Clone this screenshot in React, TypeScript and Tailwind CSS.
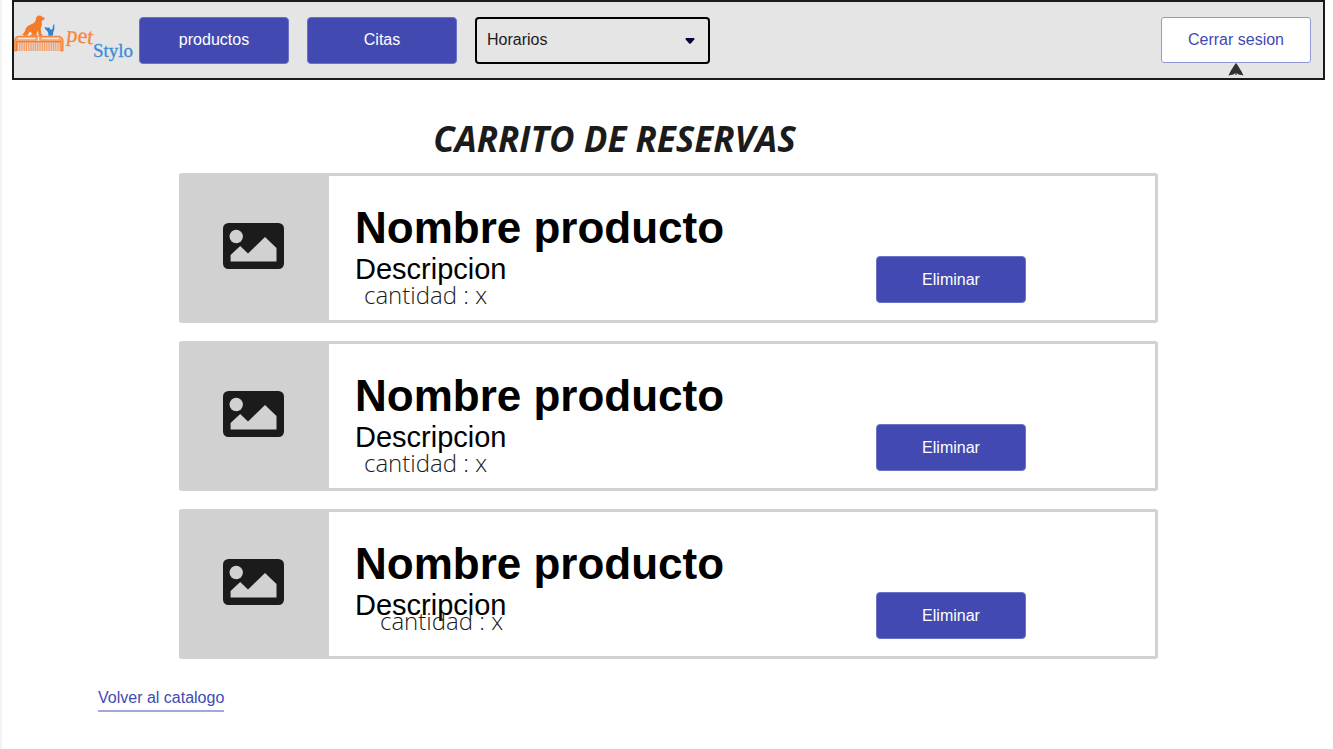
import React from "react";

const products = [
  { id: 1, quantity: "ml-[9px]" },
  { id: 2, quantity: "ml-[9px]" },
  { id: 3, quantity: "ml-[25px] -mt-[10px]" },
];

const primaryButton =
  "h-[47px] w-[150px] shrink-0 rounded border border-[#6b71c6] bg-[#424ab2] text-base text-white";

function Logo() {
  return (
    <svg
      viewBox="0 0 120 56"
      className="h-[56px] w-[120px] shrink-0"
      role="img"
      aria-label="pet Stylo"
    >
      <path
        fill="#f47b2a"
        d="M8 22.300C9.500 21.800 10.800 20 11.300 18C11.800 15.500 14 13.200 17.500 12.200C19.800 11.400 21 10.200 21.700 8.200C22 5.800 22.800 3.800 24.800 3.500C26.300 3.200 27.300 3.800 27.800 4.800L30.500 5.800C30.800 7 30 8.100 28.700 8.300C27.600 8.800 27.700 10 27.800 11.500C28 13.500 27.300 15.300 26.700 16.500L27.200 21.700L28.600 22.800V23.800H24.800L23.800 18.300L22.300 22.300L23.800 23.800H16L18.300 21.500L16 19.500L13.500 22.800L14.300 23.800H11C10 23.800 9 23.200 8 22.300Z"
      />
      <path
        fill="#2d83d2"
        d="M30.800 14.800L32.800 15.800L35 15.400C36 16.500 36.700 17.500 37.300 18C38.600 17.200 38.900 16 38.800 14.800C38.800 13.300 39.400 12.500 40.800 12.300C39.800 13.500 40.400 14.500 40.400 16C40.400 18 39.700 19 39.200 20C39.400 21.500 39 22.800 38.500 23.800H34.200C34.700 22 34.300 20.500 33.300 19C31.800 18.300 30.700 16.800 30.800 14.800Z"
      />
      <path
        fill="#f7a571"
        stroke="#f47b2a"
        strokeWidth="1"
        d="M4.500 24.300H44.500C47.500 24.300 49 26 49 29V39H46.800V29.500H2.500V39H.8V29C.8 26 2 24.300 4.500 24.300Z"
      />
      <path stroke="#fbe3d2" strokeWidth="1.300" fill="none" d="M4 26.500H21M28 26.500H45M24.500 24.500V29" />
      <path stroke="#f47b2a" strokeWidth="1.200" fill="none" d="M2.500 30H47" />
      <path
        stroke="#f49a62"
        strokeWidth="1.100"
        fill="none"
        d="M3.500 30V39M5.300 30V39M7.100 30V39M8.900 30V39M10.700 30V39M12.500 30V39M14.300 30V39M16.100 30V39M17.900 30V39M19.700 30V39M21.500 30V39M23.300 30V39M25.100 30V39M26.900 30V39M28.700 30V39M30.500 30V39M32.300 30V39M34.100 30V39M35.900 30V39M37.700 30V39M39.500 30V39M41.300 30V39M43.100 30V39M44.900 30V39"
      />
      <text
        x="52"
        y="29"
        fontSize="22"
        fill="#f5873d"
        stroke="#f5873d"
        strokeWidth=".3"
        transform="rotate(7 52 29)"
        className="font-['Liberation_Serif',serif]"
      >
        pet
      </text>
      <text
        x="79"
        y="45"
        fontSize="19"
        fill="#3d8bd6"
        stroke="#3d8bd6"
        strokeWidth=".3"
        className="font-['Liberation_Serif',serif]"
      >
        Stylo
      </text>
    </svg>
  );
}

function ImageIcon() {
  return (
    <svg viewBox="0 0 61 46" className="h-[46px] w-[61px]" aria-hidden="true">
      <rect width="61" height="46" rx="5.500" fill="#1b1b1b" />
      <circle cx="13.200" cy="13.500" r="6.700" fill="#d1d1d1" />
      <path fill="#d1d1d1" d="M7.600 38.500V32L17.200 23L25 30.500L42 14L53.500 25V38.500Z" />
    </svg>
  );
}

function Header() {
  return (
    <header className="ml-3 mr-2 flex h-20 items-center border-2 border-[#1b1b1b] bg-[#e5e5e5]">
      <Logo />
      <nav className="ml-[5px] flex items-center gap-[18px]">
        <button type="button" className={primaryButton}>
          productos
        </button>
        <button type="button" className={primaryButton}>
          Citas
        </button>
        <div className="relative">
          <select
            aria-label="Horarios"
            className="block h-[47px] w-[235px] appearance-none rounded border-2 border-black bg-transparent pl-[10px] text-base text-[#1b1b1b]"
          >
            <option>Horarios</option>
          </select>
          <svg
            viewBox="0 0 10 6"
            className="pointer-events-none absolute right-[15px] top-[21px] h-[6px] w-[10px]"
            aria-hidden="true"
          >
            <path d="M1 0H9Q10 .6 9.300 1.500L5.800 5.400Q5 6 4.200 5.400L.7 1.500Q0 .6 1 0Z" fill="#05053c" />
          </svg>
        </div>
      </nav>
      <div className="relative ml-auto mr-3">
        <button
          type="button"
          className="block h-[46px] w-[150px] rounded-[3px] border border-[#9398d6] bg-white text-base text-[#424ab2]"
        >
          Cerrar sesion
        </button>
        <svg
          viewBox="0 0 16 13"
          className="absolute left-[67px] top-[46px] h-[13px] w-[16px]"
          aria-hidden="true"
        >
          <path d="M8 0C9.500 1.500 13.500 8 15.500 12.500L10.500 11.500L8.600 10V12H7.400V10L5.500 11.500L.5 12.500C2.500 8 6.500 1.500 8 0Z" fill="#303030" />
        </svg>
      </div>
    </header>
  );
}

function ProductCard({ quantity }: { quantity: string }) {
  return (
    <li className="flex h-[150px] rounded-[3px] border-3 border-[#d1d1d1] bg-white">
      <div className="flex w-[147px] shrink-0 items-center justify-center bg-[#d1d1d1] pb-[5px] pr-[5px]">
        <ImageIcon />
      </div>
      <div className="min-w-0 flex-1 pl-[26px] pt-7 text-black">
        <h2 className="text-[44px] leading-[48px] font-bold">Nombre producto</h2>
        <p className="text-[29px] leading-[34px]">Descripcion</p>
        <p className={`font-['Open_Sans',sans-serif] text-2xl leading-[18px] font-light text-[#1b1b1b] ${quantity}`}>
          cantidad : x
        </p>
      </div>
      <button type="button" className={`${primaryButton} mr-[129px] mt-20`}>
        Eliminar
      </button>
    </li>
  );
}

export default function App() {
  return (
    <div className="min-h-screen border-l-2 border-[#f3f3f3] bg-white font-['Liberation_Sans',Arial,sans-serif]">
      <div className="-ml-[2px]">
        <Header />
        <main className="pl-[179px] pr-[175px]">
          <h1 className="mt-[35px] pr-[108px] text-center font-['Open_Sans',sans-serif] text-[35px] leading-[48px] font-bold text-[#1b1b1b] italic">
            CARRITO DE RESERVAS
          </h1>
          <ul className="mt-[10px] flex flex-col gap-[18px]">
            {products.map((product) => (
              <ProductCard key={product.id} quantity={product.quantity} />
            ))}
          </ul>
        </main>
        <footer className="mt-[27px] pl-[98px]">
          <a
            href="#catalogo"
            className="inline-block border-b-2 border-[#a3a7de] pb-px text-base leading-[23px] text-[#424ab2]"
          >
            Volver al catalogo
          </a>
        </footer>
      </div>
    </div>
  );
}
